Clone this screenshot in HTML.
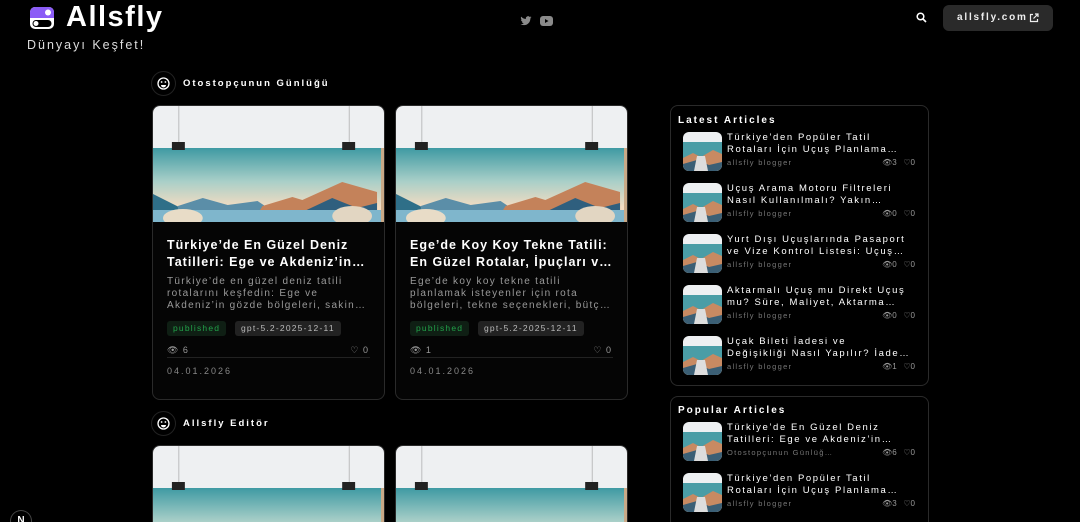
<!DOCTYPE html>
<html><head><meta charset="utf-8"><style>
*{margin:0;padding:0;box-sizing:border-box}
html,body{width:1080px;height:522px;overflow:hidden}
body{background:#000;font-family:"Liberation Sans","DejaVu Sans",sans-serif;color:#fff;position:relative}
.a{position:absolute}
.card{position:absolute;width:233px;height:295px;border:1px solid #2a2a2a;border-radius:8px;overflow:hidden;background:#050505}
.card.cut{height:77px;border-bottom:none;border-radius:8px 8px 0 0}
.card svg.img{position:absolute;left:0;top:0;width:231px;height:116px}
.clamp{display:-webkit-box;-webkit-box-orient:vertical;overflow:hidden}
.ttl{position:absolute;left:14px;top:131px;width:205px;height:34px;font-size:12.5px;font-weight:bold;letter-spacing:1px;line-height:17px;-webkit-line-clamp:2}
.desc{position:absolute;left:14px;top:170px;width:205px;height:36px;font-size:10px;letter-spacing:1.3px;line-height:12px;color:#9a9a9a;-webkit-line-clamp:3}
.tag{position:absolute;top:215px;height:15px;font-size:8.5px;letter-spacing:1.2px;line-height:15px;border-radius:3px;background:#222;color:#bbb;padding:0 6px;white-space:nowrap}
.st{position:absolute;top:239px;font-size:9px;color:#999;letter-spacing:1px}
.hr{position:absolute;left:14px;right:14px;top:251px;border-top:1px solid #222}
.dt{position:absolute;left:14px;top:260px;font-size:9px;color:#888;letter-spacing:2px}
.box{position:absolute;left:670px;width:259px;border:1px solid #2a2a2a;border-radius:8px}
.bh{position:absolute;left:7px;font-size:10px;font-weight:bold;letter-spacing:2px;white-space:nowrap}
.it{position:absolute;left:12px;width:235px;height:40px}
.it svg{position:absolute;left:0;top:0;width:39px;height:39px;border-radius:6px}
.it .t{position:absolute;left:44px;top:0px;width:182px;height:24px;font-size:9.5px;letter-spacing:1.6px;line-height:12px;-webkit-line-clamp:2}
.it .s{position:absolute;left:44px;top:26px;font-size:7.5px;color:#777;letter-spacing:1.3px;white-space:nowrap}
.it .n{position:absolute;right:3px;top:26px;font-size:8px;color:#999;white-space:nowrap}
.sec{position:absolute;left:151px;height:25px}
.sec .c{position:absolute;left:0;top:0;width:25px;height:25px;border-radius:50%;border:1px solid #222}
.sec .l{position:absolute;left:32px;top:7px;font-size:9.5px;font-weight:bold;letter-spacing:2px;white-space:nowrap}
</style></head><body>

<svg class="a" style="left:29px;top:6px" width="26" height="24" viewBox="0 0 26 24"><rect x="1" y="1" width="24" height="22" rx="5" fill="#fff"/><rect x="1" y="1" width="24" height="11" rx="5" fill="#8b5cf6"/><rect x="1" y="7" width="24" height="5" fill="#8b5cf6"/><circle cx="19" cy="6.5" r="3" fill="#fff"/><rect x="3.5" y="14" width="19" height="7" rx="3.5" fill="#000"/><circle cx="7" cy="17.5" r="2.5" fill="#fff"/></svg>
<div class="a" style="left:66px;top:1px;font-size:29px;font-weight:bold;letter-spacing:1.5px">Allsfly</div>
<div class="a" style="left:27px;top:38px;font-size:12.5px;letter-spacing:2px;color:#ddd">Dünyayı Keşfet!</div>
<svg class="a" style="left:520px;top:15px" width="12" height="12" viewBox="0 0 24 24"><path fill="#8a8a8a" d="M23 4.6a9 9 0 0 1-2.6.7 4.6 4.6 0 0 0 2-2.5 9 9 0 0 1-2.9 1.1A4.5 4.5 0 0 0 11.8 8 12.8 12.8 0 0 1 2.5 3.3a4.5 4.5 0 0 0 1.4 6 4.5 4.5 0 0 1-2-.6v.1a4.5 4.5 0 0 0 3.6 4.4 4.5 4.5 0 0 1-2 .1 4.5 4.5 0 0 0 4.2 3.1A9 9 0 0 1 1 18.3 12.8 12.8 0 0 0 7.9 20.3c8.3 0 12.8-6.9 12.8-12.8v-.6A9 9 0 0 0 23 4.6z"/></svg>
<svg class="a" style="left:540px;top:16px" width="13" height="10" viewBox="0 0 13 10"><rect width="13" height="10" rx="3" fill="#8a8a8a"/><path d="M5 3v4l3.5-2z" fill="#000"/></svg>
<svg class="a" style="left:916px;top:12px" width="11" height="11" viewBox="0 0 11 11"><circle cx="4.5" cy="4.5" r="3.3" stroke="#fff" stroke-width="1.5" fill="none"/><path d="M7 7l3 3" stroke="#fff" stroke-width="1.6"/></svg>
<div class="a" style="left:943px;top:5px;width:110px;height:26px;border-radius:6px;background:#2a2a2a"></div>
<div class="a" style="left:957px;top:5px;line-height:26px;font-size:10px;font-weight:bold;letter-spacing:1.8px;color:#eee">allsfly.com</div>
<svg class="a" style="left:1029px;top:13px" width="10" height="10" viewBox="0 0 10 10"><path d="M4 1.5H1.5v7h7V6M6 1h3v3M9 1L4.5 5.5" stroke="#eee" stroke-width="1.2" fill="none"/></svg>

<div class="sec" style="top:71px"><div class="c"></div>
<svg class="a" style="left:6px;top:6px" width="13" height="13" viewBox="0 0 13 13"><circle cx="6.5" cy="6.5" r="5.5" stroke="#fff" stroke-width="1.3" fill="none"/><circle cx="4.6" cy="5" r=".9" fill="#fff"/><circle cx="8.4" cy="5" r=".9" fill="#fff"/><path d="M4 8h5a2.5 2.5 0 0 1-5 0z" fill="#fff"/></svg>
<div class="l">Otostopçunun Günlüğü</div></div>

<div class="card" style="left:152px;top:105px">
<svg class="img" viewBox="0 0 232 116" preserveAspectRatio="none"><defs><linearGradient id="g" x1="0" y1="0" x2="0" y2="1"><stop offset="0" stop-color="#3f9aa3"/><stop offset=".45" stop-color="#a9cfc8"/><stop offset=".8" stop-color="#f3dcc2"/></linearGradient></defs><rect width="232" height="116" fill="#eef0f2"/><rect y="42" width="232" height="74" fill="url(#g)"/><path d="M0 88l30 15 20 13H0z" fill="#2f6f88"/><path d="M25 100l25-8 25 7 30-4 15 10H25z" fill="#5b8ea8"/><path d="M110 100l30-9 10 3 40-18 35 10v30H100z" fill="#c4825a"/><path d="M150 106l30-14 25 10 20-5v19H140z" fill="#2f5f7e"/><rect y="104" width="232" height="12" fill="#7fb6cc"/><ellipse cx="30" cy="112" rx="20" ry="9" fill="#e8dcc7"/><ellipse cx="200" cy="110" rx="20" ry="10" fill="#e2d6c2"/><rect x="229" y="42" width="3" height="74" fill="#c9a987"/><path d="M26 0v36M197 0v36" stroke="#999" stroke-width=".6"/><rect x="19" y="36" width="13" height="8" fill="#222"/><rect x="190" y="36" width="13" height="8" fill="#222"/></svg>
<div class="ttl clamp">Türkiye’de En Güzel Deniz Tatilleri: Ege ve Akdeniz’in Gözde Koyları</div>
<div class="desc clamp">Türkiye’de en güzel deniz tatili rotalarını keşfedin: Ege ve Akdeniz’in gözde bölgeleri, sakin koylar ve daha fazlası</div>
<div class="tag" style="left:14px;color:#22a24a;background:#0f1f14">published</div>
<div class="tag" style="left:82px">gpt-5.2-2025-12-11</div>
<div class="st" style="left:14px">👁︎ 6</div><div class="st" style="right:15px">♡ 0</div>
<div class="hr"></div><div class="dt">04.01.2026</div>
</div>

<div class="card" style="left:395px;top:105px">
<svg class="img" viewBox="0 0 232 116" preserveAspectRatio="none"><rect width="232" height="116" fill="#eef0f2"/><rect y="42" width="232" height="74" fill="url(#g)"/><path d="M0 88l30 15 20 13H0z" fill="#2f6f88"/><path d="M25 100l25-8 25 7 30-4 15 10H25z" fill="#5b8ea8"/><path d="M110 100l30-9 10 3 40-18 35 10v30H100z" fill="#c4825a"/><path d="M150 106l30-14 25 10 20-5v19H140z" fill="#2f5f7e"/><rect y="104" width="232" height="12" fill="#7fb6cc"/><ellipse cx="30" cy="112" rx="20" ry="9" fill="#e8dcc7"/><ellipse cx="200" cy="110" rx="20" ry="10" fill="#e2d6c2"/><rect x="229" y="42" width="3" height="74" fill="#c9a987"/><path d="M26 0v36M197 0v36" stroke="#999" stroke-width=".6"/><rect x="19" y="36" width="13" height="8" fill="#222"/><rect x="190" y="36" width="13" height="8" fill="#222"/></svg>
<div class="ttl clamp">Ege’de Koy Koy Tekne Tatili: En Güzel Rotalar, İpuçları ve Öneriler</div>
<div class="desc clamp">Ege’de koy koy tekne tatili planlamak isteyenler için rota bölgeleri, tekne seçenekleri, bütçe ve daha fazlası</div>
<div class="tag" style="left:14px;color:#22a24a;background:#0f1f14">published</div>
<div class="tag" style="left:82px">gpt-5.2-2025-12-11</div>
<div class="st" style="left:14px">👁︎ 1</div><div class="st" style="right:15px">♡ 0</div>
<div class="hr"></div><div class="dt">04.01.2026</div>
</div>

<div class="sec" style="top:411px"><div class="c"></div>
<svg class="a" style="left:6px;top:6px" width="13" height="13" viewBox="0 0 13 13"><circle cx="6.5" cy="6.5" r="5.5" stroke="#fff" stroke-width="1.3" fill="none"/><circle cx="4.6" cy="5" r=".9" fill="#fff"/><circle cx="8.4" cy="5" r=".9" fill="#fff"/><path d="M4 8h5a2.5 2.5 0 0 1-5 0z" fill="#fff"/></svg>
<div class="l">Allsfly Editör</div></div>

<div class="card cut" style="left:152px;top:445px">
<svg class="img" viewBox="0 0 232 116" preserveAspectRatio="none"><rect width="232" height="116" fill="#eef0f2"/><rect y="42" width="232" height="74" fill="url(#g)"/><rect x="229" y="42" width="3" height="74" fill="#c9a987"/><path d="M26 0v36M197 0v36" stroke="#999" stroke-width=".6"/><rect x="19" y="36" width="13" height="8" fill="#222"/><rect x="190" y="36" width="13" height="8" fill="#222"/></svg></div>
<div class="card cut" style="left:395px;top:445px">
<svg class="img" viewBox="0 0 232 116" preserveAspectRatio="none"><rect width="232" height="116" fill="#eef0f2"/><rect y="42" width="232" height="74" fill="url(#g)"/><rect x="229" y="42" width="3" height="74" fill="#c9a987"/><path d="M26 0v36M197 0v36" stroke="#999" stroke-width=".6"/><rect x="19" y="36" width="13" height="8" fill="#222"/><rect x="190" y="36" width="13" height="8" fill="#222"/></svg></div>

<div class="box" style="top:105px;height:281px">
<div class="bh" style="top:9px">Latest Articles</div>
<div class="it" style="top:26px"><svg viewBox="0 0 39 39"><rect width="39" height="39" fill="#eef0f2"/><rect y="10" width="39" height="29" fill="#4a9da6"/><path d="M0 26l10-5 8 4 12-7 9 4v17H0z" fill="#c88a62"/><path d="M0 32l14-4 12 5 13-3v9H0z" fill="#3b5f75"/><path d="M14 24l8 0 3 15h-14z" fill="#ddd"/></svg><div class="t clamp">Türkiye’den Popüler Tatil Rotaları İçin Uçuş Planlama Rehberi</div><div class="s">allsfly blogger</div><div class="n">👁︎3 &nbsp; ♡0</div></div>
<div class="it" style="top:77px"><svg viewBox="0 0 39 39"><rect width="39" height="39" fill="#eef0f2"/><rect y="10" width="39" height="29" fill="#4a9da6"/><path d="M0 26l10-5 8 4 12-7 9 4v17H0z" fill="#c88a62"/><path d="M0 32l14-4 12 5 13-3v9H0z" fill="#3b5f75"/><path d="M14 24l8 0 3 15h-14z" fill="#ddd"/></svg><div class="t clamp">Uçuş Arama Motoru Filtreleri Nasıl Kullanılmalı? Yakın Havalimanları</div><div class="s">allsfly blogger</div><div class="n">👁︎0 &nbsp; ♡0</div></div>
<div class="it" style="top:128px"><svg viewBox="0 0 39 39"><rect width="39" height="39" fill="#eef0f2"/><rect y="10" width="39" height="29" fill="#4a9da6"/><path d="M0 26l10-5 8 4 12-7 9 4v17H0z" fill="#c88a62"/><path d="M0 32l14-4 12 5 13-3v9H0z" fill="#3b5f75"/><path d="M14 24l8 0 3 15h-14z" fill="#ddd"/></svg><div class="t clamp">Yurt Dışı Uçuşlarında Pasaport ve Vize Kontrol Listesi: Uçuş Öncesi</div><div class="s">allsfly blogger</div><div class="n">👁︎0 &nbsp; ♡0</div></div>
<div class="it" style="top:179px"><svg viewBox="0 0 39 39"><rect width="39" height="39" fill="#eef0f2"/><rect y="10" width="39" height="29" fill="#4a9da6"/><path d="M0 26l10-5 8 4 12-7 9 4v17H0z" fill="#c88a62"/><path d="M0 32l14-4 12 5 13-3v9H0z" fill="#3b5f75"/><path d="M14 24l8 0 3 15h-14z" fill="#ddd"/></svg><div class="t clamp">Aktarmalı Uçuş mu Direkt Uçuş mu? Süre, Maliyet, Aktarma Riski</div><div class="s">allsfly blogger</div><div class="n">👁︎0 &nbsp; ♡0</div></div>
<div class="it" style="top:230px"><svg viewBox="0 0 39 39"><rect width="39" height="39" fill="#eef0f2"/><rect y="10" width="39" height="29" fill="#4a9da6"/><path d="M0 26l10-5 8 4 12-7 9 4v17H0z" fill="#c88a62"/><path d="M0 32l14-4 12 5 13-3v9H0z" fill="#3b5f75"/><path d="M14 24l8 0 3 15h-14z" fill="#ddd"/></svg><div class="t clamp">Uçak Bileti İadesi ve Değişikliği Nasıl Yapılır? İade Koşulları</div><div class="s">allsfly blogger</div><div class="n">👁︎1 &nbsp; ♡0</div></div>
</div>

<div class="box" style="top:396px;height:126px;border-bottom:none;border-radius:8px 8px 0 0">
<div class="bh" style="top:8px">Popular Articles</div>
<div class="it" style="top:25px"><svg viewBox="0 0 39 39"><rect width="39" height="39" fill="#eef0f2"/><rect y="10" width="39" height="29" fill="#4a9da6"/><path d="M0 26l10-5 8 4 12-7 9 4v17H0z" fill="#c88a62"/><path d="M0 32l14-4 12 5 13-3v9H0z" fill="#3b5f75"/><path d="M14 24l8 0 3 15h-14z" fill="#ddd"/></svg><div class="t clamp">Türkiye’de En Güzel Deniz Tatilleri: Ege ve Akdeniz’in Gözde Koyları</div><div class="s">Otostopçunun Günlüğ…</div><div class="n">👁︎6 &nbsp; ♡0</div></div>
<div class="it" style="top:76px"><svg viewBox="0 0 39 39"><rect width="39" height="39" fill="#eef0f2"/><rect y="10" width="39" height="29" fill="#4a9da6"/><path d="M0 26l10-5 8 4 12-7 9 4v17H0z" fill="#c88a62"/><path d="M0 32l14-4 12 5 13-3v9H0z" fill="#3b5f75"/><path d="M14 24l8 0 3 15h-14z" fill="#ddd"/></svg><div class="t clamp">Türkiye’den Popüler Tatil Rotaları İçin Uçuş Planlama Rehberi</div><div class="s">allsfly blogger</div><div class="n">👁︎3 &nbsp; ♡0</div></div>
</div>

<div class="a" style="left:10px;top:510px;width:22px;height:12px;border-radius:11px 11px 0 0;border:1px solid #444;border-bottom:none;font-size:10px;text-align:center;line-height:20px;font-weight:bold;overflow:hidden">N</div>
</body></html>
